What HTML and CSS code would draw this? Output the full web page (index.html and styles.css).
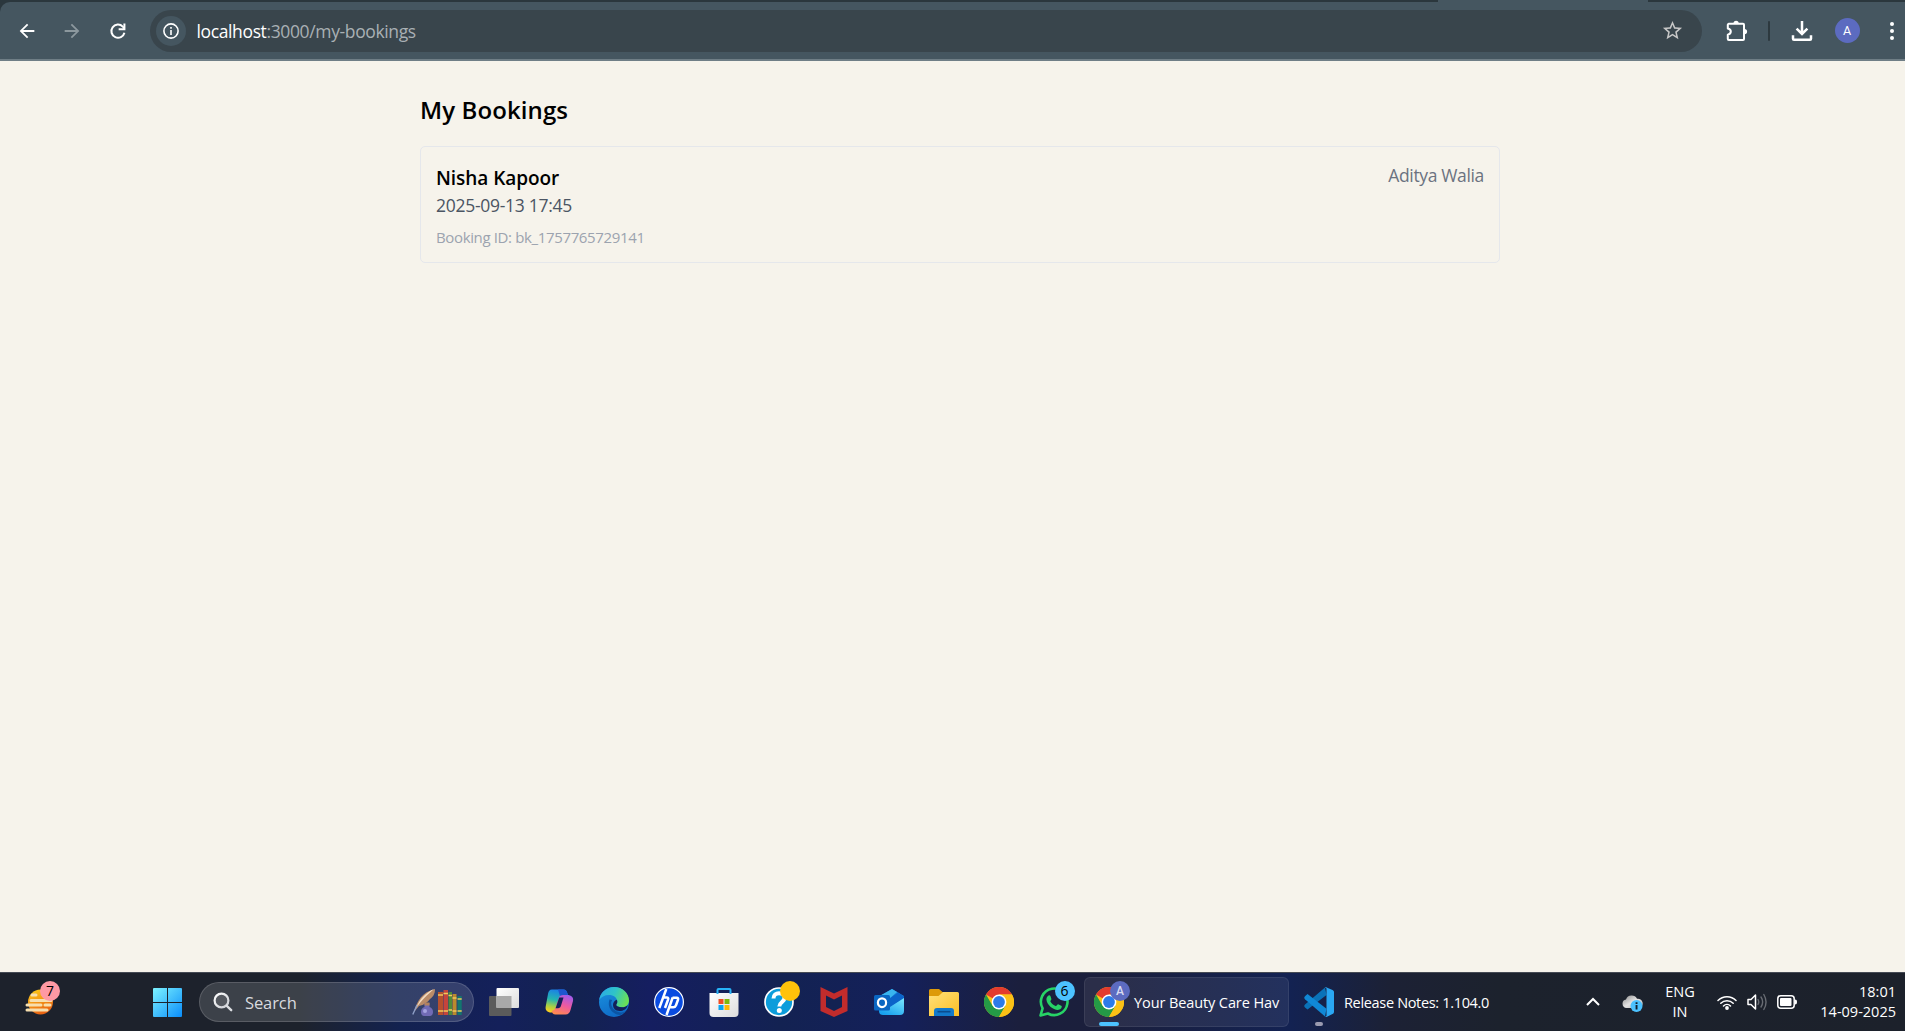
FILE: index.html
```html
<!DOCTYPE html>
<html lang="en">
<head>
<meta charset="utf-8">
<title>My Bookings</title>
<link rel="stylesheet" href="styles.css">
</head>
<body>
<svg class="defs" width="0" height="0" aria-hidden="true">
  <defs>
    <linearGradient id="win" x1="0" y1="0" x2="1" y2="1"><stop offset="0" stop-color="#7df3ff"/><stop offset="1" stop-color="#0a8dfa"/></linearGradient>
    <linearGradient id="sun" x1="0" y1="0" x2="0.4" y2="1"><stop offset="0" stop-color="#ffd21a"/><stop offset="1" stop-color="#ea6412"/></linearGradient>
    <linearGradient id="lens" x1="0" y1="0" x2="1" y2="1"><stop offset="0" stop-color="#fff"/><stop offset="1" stop-color="#c9ccd2"/></linearGradient>
    <linearGradient id="white" x1="0" y1="0" x2="1" y2="1"><stop offset="0" stop-color="#fff"/><stop offset="1" stop-color="#dcdcdc"/></linearGradient>
    <linearGradient id="cpL" x1="0.5" y1="0" x2="0.3" y2="1"><stop offset="0" stop-color="#1a7fe8"/><stop offset="0.45" stop-color="#25b6b0"/><stop offset="0.75" stop-color="#a9cf45"/><stop offset="1" stop-color="#ffcf1c"/></linearGradient>
    <linearGradient id="cpR" x1="0.7" y1="0" x2="0.3" y2="1"><stop offset="0" stop-color="#a25bea"/><stop offset="0.5" stop-color="#ee5aa0"/><stop offset="1" stop-color="#ff8a4f"/></linearGradient>
    <linearGradient id="edA" x1="0" y1="0.2" x2="1" y2="0.5"><stop offset="0" stop-color="#2ba9e8"/><stop offset="0.5" stop-color="#2fc3c8"/><stop offset="1" stop-color="#6be055"/></linearGradient>
    <linearGradient id="edB" x1="0" y1="0" x2="0.4" y2="1"><stop offset="0" stop-color="#1b94e0"/><stop offset="1" stop-color="#0f6cc8"/></linearGradient>
    <linearGradient id="fold" x1="0" y1="0" x2="1" y2="1"><stop offset="0" stop-color="#ffe07a"/><stop offset="1" stop-color="#fcbf24"/></linearGradient>
    <linearGradient id="otl" x1="1" y1="0" x2="0.3" y2="1"><stop offset="0" stop-color="#7be8fd"/><stop offset="1" stop-color="#18a0ee"/></linearGradient>
    <linearGradient id="cloud" x1="0" y1="0" x2="1" y2="1"><stop offset="0" stop-color="#8a8a8a"/><stop offset="0.5" stop-color="#e2e2e2"/><stop offset="1" stop-color="#b0b0b0"/></linearGradient>
    <symbol id="chrome" viewBox="0 0 30 30">
      <circle cx="15" cy="15" r="15" fill="#fbc116"/>
      <path d="M15 15 2 7.5A15 15 0 0 1 28 7.5H15z" fill="#e33b2e"/>
      <path d="M2 7.5A15 15 0 0 0 15 30L21.5 18.75 15 15 8.5 18.75z" fill="#249a46"/>
      <path d="M28 7.5A15 15 0 0 1 15 30L21.5 18.75 15 7.5z" fill="#fbc116"/>
      <circle cx="15" cy="15" r="7.4" fill="#fff"/>
      <circle cx="15" cy="15" r="5.9" fill="#2c7be9"/>
    </symbol>
  </defs>
</svg>

<header class="browser">
  <div class="tab-strip"><span class="tab"></span></div>
  <div class="toolbar">
    <nav class="nav">
      <svg viewBox="0 0 24 24" width="22" height="22"><path fill="#fff" d="M20 11H7.800l5.600-5.600L12 4l-8 8 8 8 1.400-1.400L7.800 13H20z"/></svg>
      <svg viewBox="0 0 24 24" width="22" height="22"><path fill="#8c989e" d="M4 11h12.200l-5.600-5.600L12 4l8 8-8 8-1.400-1.400 5.600-5.600H4z"/></svg>
      <svg viewBox="0 0 24 24" width="22" height="22"><path fill="none" stroke="#fff" stroke-width="2.200" d="M19 13.800A7.200 7.200 0 1 1 17.200 7.200L19 9"/><path fill="none" stroke="#fff" stroke-width="2.200" d="M19 3.700V10h-6.300"/></svg>
    </nav>
    <div class="address">
      <span class="site-info"><svg viewBox="0 0 16 16" width="16" height="16"><circle cx="8" cy="8" r="7.100" fill="none" stroke="#fff" stroke-width="1.600"/><path fill="#fff" d="M7.200 7h1.600v5H7.200zM7.200 4h1.600v1.700H7.200z"/></svg></span>
      <span class="url"><b>localhost</b>:3000/my-bookings</span>
      <svg class="star" viewBox="0 0 24 24" width="23" height="23"><path fill="#c7c7c7" d="M22 9.240l-7.190-.620L12 2 9.190 8.630 2 9.240l5.460 4.730L5.820 21 12 17.270 18.180 21l-1.630-7.030zM12 15.400l-3.760 2.270 1-4.280-3.320-2.880 4.380-.380L12 6.100l1.710 4.040 4.380.380-3.320 2.880 1 4.280z"/></svg>
    </div>
    <div class="actions">
      <svg class="puzzle" viewBox="0 0 22 22" width="22" height="22"><path fill="none" stroke="#fff" stroke-width="2" stroke-linejoin="round" d="M3.300 3.800H17a1 1 0 0 1 1 1V19a1 1 0 0 1-1 1H2.800a1 1 0 0 1-1-1v-4.300c2-.4 3-1.500 3-3.100s-1-2.700-3-3.100V4.800a1 1 0 0 1 1-1z"/><path fill="#fff" d="M7.500 3.300a2.600 2.600 0 0 1 5.200 0zM18.500 9a2.600 2.600 0 0 1 0 5.200z"/></svg>
      <i class="separator"></i>
      <svg class="download" viewBox="0 0 22 22" width="22" height="22"><path fill="none" stroke="#fff" stroke-width="2.500" d="M11 1v12.500M5.600 8.600 11 14l5.400-5.400M2 15.200v3.600a1 1 0 0 0 1 1h16a1 1 0 0 0 1-1v-3.600"/></svg>
      <span class="profile">A</span>
      <svg class="more" viewBox="0 0 4 18" width="4" height="18"><g fill="#fff"><circle cx="2" cy="2" r="2"/><circle cx="2" cy="9" r="2"/><circle cx="2" cy="16" r="2"/></g></svg>
    </div>
  </div>
</header>

<main class="page">
  <h1>My Bookings</h1>
  <article class="booking">
    <div class="details">
      <h2>Nisha Kapoor</h2>
      <p class="when">2025-09-13 17:45</p>
      <p class="ref">Booking ID: bk_1757765729141</p>
    </div>
    <p class="client">Aditya Walia</p>
  </article>
</main>

<footer class="taskbar">
  <div class="weather">
    <svg viewBox="0 0 30 28" width="30" height="28"><circle cx="15.500" cy="14" r="12.500" fill="url(#sun)"/><g stroke="#f7dfae" stroke-width="3" stroke-linecap="round"><path d="M7 7h4M6 12.500h20M2 17h14M20 17h5M2 22h20"/></g></svg>
    <span class="badge pink">7</span>
  </div>
  <svg class="start" viewBox="0 0 29 29" width="29" height="29"><path fill="url(#win)" d="M0 1a1 1 0 0 1 1-1h13v14H0zM15 0h13a1 1 0 0 1 1 1v13H15zM0 15h14v14H1a1 1 0 0 1-1-1zM15 15h14v13a1 1 0 0 1-1 1H15z"/></svg>
  <div class="search">
    <svg viewBox="0 0 20 20" width="20" height="20"><circle cx="8.500" cy="8.500" r="6.900" fill="#ffffff20" stroke="url(#lens)" stroke-width="2.200"/><path stroke="#dcdee2" stroke-width="2.400" stroke-linecap="round" d="m13.800 13.800 4.400 4.400"/></svg>
    <span>Search</span>
    <svg class="highlight" viewBox="0 0 50 28" width="50" height="28">
      <path d="M2 24C5 13 10 4 23 1c0 5-2 8-5 10-2 3-6 6-11 7z" fill="#b98b68"/><path d="M4 20C8 11 13 5 22 1 15 7 10 12 4 20z" fill="#f3dcc0"/><path d="M.8 26.500 5 17" stroke="#8fa0c8" stroke-width="1.400"/>
      <path d="M12.500 15h5v4c2.500 1 3.500 2.500 3.500 5 0 2.500-1.500 4-3 4h-6c-1.500 0-3-1.500-3-4 0-2.500 1-4 3.500-5z" fill="#716bb5"/><path d="M12.500 14.500h5v3h-5z" fill="#b3825e"/><circle cx="13" cy="23" r="2" fill="#a5a3e0"/>
      <path fill="#b5502e" d="M26 4h5v23h-5z"/><path fill="#c5443c" d="M31.500 2H36v25h-4.500z"/><path fill="#4e8a3c" d="M36.500 4H40v23h-3.500z"/><path fill="#ba8a2d" d="M40.500 6h4v21h-4z"/><path fill="#12766f" d="M45.500 8h4.200v19h-4.200z"/>
      <path stroke="#f0c95a" stroke-width="1.300" d="M26 7h5M26 23h5M31.500 5.500H36M31.500 23H36M36.500 7.500H40M36.500 22H40M40.500 10h4M40.500 23h4M45.500 11h4.200M45.500 23h4.200"/>
    </svg>
  </div>
  <div class="pinned">
    <span class="slot"><svg viewBox="0 0 30 30" width="30" height="30"><rect y="9" width="22.500" height="20" rx="1" fill="#5b5b5b"/><rect x="7.500" y="1" width="22.500" height="20" rx="1" fill="url(#white)"/><path fill="#a9a9a9" d="M7.500 9h15v12h-15z"/></svg></span>
    <span class="slot"><svg viewBox="0 0 30 30" width="30" height="30"><path fill="url(#cpL)" d="M8 2.500h11.500c2 0 3 1 3.600 3L24 8h-5c-2 0-3 1-3.700 3l-3.600 11c-.8 2.200-2 3.500-4.500 3.500-4 0-6.200-2.500-5.500-6L4 7c.6-2.800 1.500-4.500 4-4.500z"/><path fill="#1f56cf" d="M14 2.500h5.500c2 0 3 1 3.600 3L24 8h-5c-1.300 0-2.200.5-2.900 1.500z"/><path fill="url(#cpR)" d="M23 8c4.500 0 6.800 2.500 6 6l-2.500 9c-.8 2.800-2.200 4.500-5 4.500H11.500c-2.500 0-3.300-1.500-4-3.800 2.500 0 3.500-1.200 4.200-3.500L15 10.500C15.600 9 16.800 8 19 8z"/><path fill="#131f58" d="m15.200 10.500-3.600 10.700h2.300c1.800 0 2.500-.8 3-2.200l2.600-8.500z"/></svg></span>
    <span class="slot"><svg viewBox="0 0 30 30" width="30" height="30"><circle cx="15" cy="15" r="15" fill="url(#edB)"/><path fill="url(#edA)" d="M.2 13C1.200 5.500 7.500 0 15 0c8.500 0 15 6 15 13.500 0 4.300-3 6.800-7 6.800-3.500 0-5.800-1.200-5.800-2.300 0-.8 1.100-1.300 1.100-3.300C18.300 10.500 14.500 8 10 8 5.500 8 2 10 .2 13z"/><path fill="#0b55a5" d="M10.500 12.500C9 17 10 22 14 25.300c2 1.700 4.500 2.700 7.500 2.600l5-3.300c-2 .8-4 1-6 .6-4.500-.8-8-4.200-8.300-8.200-.1-1.700.3-3 1-4z"/><path fill="#131f58" d="M17.200 18c0 1.100 2.300 2.300 5.800 2.300 2.500 0 4.500-.9 5.700-2.400C28.300 21.500 24.500 24 20.500 24c-4 0-6.500-3-6.500-6 0-2.500 1.500-4.500 3.800-5.200.4.600.5 1.300.5 1.900 0 2-1.100 2.500-1.100 3.300z"/></svg></span>
    <span class="slot"><svg viewBox="0 0 30 30" width="30" height="30"><circle cx="15" cy="15" r="14.400" fill="#0a4be0" stroke="#fff" stroke-width="1.200"/><g fill="none" stroke="#fff" stroke-width="2.500"><path d="M12.300 2 5.300 21M9.500 10.500h3.300c1.400 0 1.700.8 1.300 2L11 21M18.700 10.500 12.500 28M18.500 10.800h4.200c1.500 0 1.700.8 1.300 2l-2 5.500c-.5 1.300-1.200 2-2.700 2h-3.600"/></g></svg></span>
    <span class="slot"><svg viewBox="0 0 30 30" width="30" height="30"><path fill="url(#white)" d="M.500 6h29v20a4 4 0 0 1-4 4h-21a4 4 0 0 1-4-4z"/><path fill="none" stroke="#27b3f7" stroke-width="2" d="M8.500 7V3a1 1 0 0 1 1-1h11a1 1 0 0 1 1 1v4"/><path fill="#f04e23" d="M9.500 12h5v5h-5z"/><path fill="#7fba0a" d="M15.500 12h5v5h-5z"/><path fill="#09a4ef" d="M9.500 18h5v5h-5z"/><path fill="#ffb904" d="M15.500 18h5v5h-5z"/></svg></span>
    <span class="slot"><svg viewBox="0 0 30 30" width="30" height="30"><circle cx="15" cy="15" r="14" fill="#0c9ddb" stroke="#fff" stroke-width="1.700"/><path fill="none" stroke="#fff" stroke-width="4" d="M9.500 11.500C9.500 8 12 6.200 15 6.200s5.500 1.700 5.500 4.800c0 4-5.200 4-5.200 8.500"/><circle cx="15.300" cy="23.500" r="2.500" fill="#fff"/></svg><i class="badge amber"></i></span>
    <span class="slot"><svg viewBox="0 0 30 30" width="30" height="30"><path fill="#c22c2c" d="m1.500 0 13.500 6.500L28.500 0v24L15 30 1.500 24z"/><path fill="#132252" d="M7 8.500 15 12.500l8-4V20l-8 4-8-4z"/></svg></span>
    <span class="slot"><svg viewBox="0 0 30 30" width="30" height="30"><path fill="#1580da" d="M5 9.500 18 2l12 7v9l-12 4H5z"/><path fill="#39b5ef" d="m6 8.800 12-6.800 5 3-8 7H8z"/><path fill="#0b63c9" d="m15 12 9-6.500 6 4v2L16 20z"/><path fill="url(#otl)" d="M30 11v13a4 4 0 0 1-4 4H9c-2 0-4-1-4-4v-2h8z"/><rect y="8" width="16" height="15.500" rx="1.500" fill="#0a66c2"/><ellipse cx="8" cy="15.700" rx="4.100" ry="4.400" fill="none" stroke="#fff" stroke-width="2.200"/></svg></span>
    <span class="slot"><svg viewBox="0 0 30 30" width="30" height="30"><path fill="#dd9a09" d="M0 3.500a1.500 1.500 0 0 1 1.500-1.500H10l3.500 3H22v8H0z"/><path fill="url(#fold)" d="M0 9h9.500L14 5h14.500A1.500 1.500 0 0 1 30 6.500V29H0z"/><path fill="#1279cb" d="M5 29v-5a3 3 0 0 1 3-3h14a3 3 0 0 1 3 3v5z"/><path stroke="#0a4d8f" stroke-width="1.600" d="M8.500 24.700h13"/></svg></span>
    <span class="slot"><svg width="30" height="30"><use href="#chrome"/></svg></span>
    <span class="slot"><svg viewBox="0 0 30 30" width="30" height="30"><path fill="none" stroke="#27d366" stroke-width="2.600" stroke-linejoin="round" d="M1.500 28.500 3.600 21.300A13.300 13.300 0 1 1 8.900 26.500z"/><path fill="#27d366" d="M10.700 8.300c.8 0 1.300 2.700 1.700 3.700.3.700-1.400 1.900-1 2.500 1.200 2.200 3 3.700 5.300 4.600.7.300 1.800-2.100 2.500-1.800l3.500 1.800c.4 2.300-1.700 3.900-3.900 3.900-4.600 0-11.300-5.300-11.400-10.700 0-1.900 1.600-4 3.300-4z"/></svg><span class="badge blue">6</span></span>
  </div>
  <div class="task active">
    <span class="app"><svg width="30" height="30"><use href="#chrome"/></svg><span class="badge violet">A</span><i class="indicator wide"></i></span>
    <span class="label care">Your Beauty Care Hav</span>
  </div>
  <div class="task">
    <span class="app"><svg viewBox="0 0 30 30" width="30" height="30"><path fill="#0a72b8" d="M3.500 22.500 1 20.500c-1-.8-1-2 0-3L21 .5 22.500 8z"/><path fill="#1088d6" d="M3.500 7 1 9.200c-1 .9-1 2.100 0 3L21 29.500l1.500-7.700z"/><path fill="#2aa7f3" d="M21.500 0 28.500 3c1 .5 1.500 1.200 1.500 2.300v19.400c0 1.100-.5 1.800-1.500 2.300L22.500 30c-.6.200-1.300 0-1.500-.5.800.3 1.500 0 1.500-1V2c0-1-.7-1.500-1.500-1.300z"/></svg><i class="indicator"></i></span>
    <span class="label">Release Notes: 1.104.0</span>
  </div>
  <div class="tray">
    <svg class="chevron" viewBox="0 0 14 10" width="14" height="10"><path fill="none" stroke="#fff" stroke-width="2" d="m1 8 6-6 6 6"/></svg>
    <svg class="onedrive" viewBox="0 0 21 17" width="21" height="17"><path fill="url(#cloud)" d="M4.500 13a4.300 4.300 0 0 1-.5-8.500A6 6 0 0 1 15 3.800 4.500 4.500 0 0 1 17 13z"/><circle cx="14.500" cy="11" r="6" fill="#4cc2ff"/><path fill="#12212e" d="M13.600 10h1.900v4.500h-1.900zM13.600 7.300h1.900v1.800h-1.900z"/></svg>
    <span class="language">ENG<br>IN</span>
    <svg class="wifi" viewBox="0 0 20 16" width="20" height="16"><g fill="none" stroke="#fff" stroke-width="1.500" stroke-linecap="round"><path d="M1 6.500a12.500 12.500 0 0 1 18 0M3.800 9.300a8.700 8.700 0 0 1 12.400 0M6.500 12a5 5 0 0 1 7 0"/></g><circle cx="10" cy="14" r="1.900" fill="#fff"/></svg>
    <svg class="volume" viewBox="0 0 20 18" width="20" height="18"><path fill="none" stroke="#fff" stroke-width="1.500" stroke-linejoin="round" d="M1 6.500h3L8.500 2v14L4 11.500H1z"/><path fill="none" stroke="#686c73" stroke-width="1.400" stroke-linecap="round" d="M11 6.500q1.500 2.500 0 5M14 4q3.300 5 0 10M16.800 1.500q4.500 7.500 0 15"/></svg>
    <svg class="battery" viewBox="0 0 20 14" width="20" height="14"><rect x=".8" y=".8" width="16.400" height="12.400" rx="3" fill="none" stroke="#fff" stroke-width="1.500"/><rect x="3" y="3" width="11.500" height="8" rx="1" fill="#fff"/><path fill="#fff" d="M18 4.500c1.300 0 2 .8 2 2.500s-.7 2.500-2 2.500z"/></svg>
    <span class="clock">18:01<br>14-09-2025</span>
  </div>
</footer>
</body>
</html>
```
FILE: styles.css
```css
* { box-sizing: border-box; margin: 0; padding: 0; }

body {
  display: flex;
  flex-direction: column;
  height: 1031px;
  overflow: hidden;
  background: #f6f3eb;
  color: #000;
  font-family: "Open Sans", "Noto Sans", sans-serif;
}

svg { display: block; flex: none; }
.defs { position: absolute; }

/* Browser toolbar */
.browser { flex: none; background: #2b373d; }
.tab-strip { height: 2px; padding-left: 1438px; }
.tab { display: block; width: 210px; height: 2px; background: #455660; }
.toolbar {
  display: flex;
  align-items: center;
  height: 59px;
  padding-left: 16px;
  background: #455660;
  border-bottom: 2px solid #6f7e86;
  border-radius: 10px 0 0 0;
}
.nav { display: flex; gap: 23.3px; width: 134px; }
.address {
  display: flex;
  align-items: center;
  width: 1552px;
  height: 42px;
  padding: 0 18px 0 6px;
  background: #39454c;
  border-radius: 21px;
}
.site-info {
  display: flex;
  align-items: center;
  justify-content: center;
  width: 30px;
  height: 30px;
  border-radius: 50%;
  background: #455660;
}
.url {
  margin-left: 10.5px;
  color: #a9b0b4;
  font-size: 17.5px;
  line-height: 24px;
  letter-spacing: -0.37px;
}
.url b { color: #fff; font-weight: 400; }
.star { margin-left: auto; }
.actions { display: flex; align-items: center; height: 42px; margin-left: 23.5px; }
.separator { width: 2px; height: 20px; margin: 0 21.5px 0 20px; background: #2d393f; border-radius: 1px; }
.profile {
  width: 25px;
  height: 25px;
  margin-left: 21.5px;
  border-radius: 50%;
  background: #5c6bc0;
  color: #fff;
  font: 12.5px/25px Roboto, sans-serif;
  text-align: center;
}
.more { margin-left: 30.5px; }

/* Bookings page */
.page { flex: 1; width: 1080px; margin-left: 420px; padding-top: 33px; }
h1 { font-size: 24px; font-weight: 600; line-height: 32px; letter-spacing: 0.1px; }
.booking {
  display: flex;
  justify-content: space-between;
  height: 117px;
  margin-top: 20px;
  padding: 15px;
  border: 1px solid #e5e7eb;
  border-radius: 5px;
}
.details { padding-top: 2px; }
h2 { font-size: 19px; font-weight: 600; line-height: 28px; letter-spacing: -0.05px; }
.when { color: #4b5563; font-size: 17.5px; line-height: 27px; letter-spacing: -0.28px; }
.ref { margin-top: 8px; color: #9ca3af; font-size: 15px; line-height: 21px; letter-spacing: -0.36px; }
.client { color: #6b7280; font-size: 17.5px; line-height: 27px; letter-spacing: -0.35px; }

/* Taskbar */
.taskbar {
  display: flex;
  align-items: center;
  flex: none;
  height: 59px;
  padding: 0 9px 0 25px;
  border-top: 1px solid #454a54;
  background: linear-gradient(90deg, #1d222c 0, #1d222c 300px, #132250 400px, #14205a 500px, #132251 580px, #151e60 650px, #132252 780px, #14205a 900px, #1b1f3d 1020px, #1b1f3c 1100px, #132252 1290px, #1c2135 1390px, #1c222d 1500px, #1c212b 100%);
  color: #fff;
  font-size: 14.5px;
}
.weather { position: relative; width: 128px; }
.badge {
  position: absolute;
  width: 20px;
  height: 20px;
  border-radius: 50%;
  color: #000;
  font-size: 14px;
  line-height: 20px;
  text-align: center;
}
.pink { left: 15px; top: -7px; background: #ff99a4; }
.amber { right: 6.5px; top: -6px; background: #ffc20a; }
.blue { right: 6.5px; top: -6px; background: #4cc2ff; }
.violet { right: -6px; top: -6px; background: #5c6bc0; color: #d9dcf2; font: 500 12px/20px Roboto, sans-serif; }

.search {
  display: flex;
  align-items: center;
  width: 275px;
  height: 40px;
  margin-left: 17px;
  padding: 0 11px 0 13px;
  border: 1px solid #ffffff26;
  border-radius: 20px;
  background: #ffffff24;
  color: #d8dadf;
  font-size: 16.5px;
  letter-spacing: -0.1px;
}
.search span { margin-left: 12px; }
.highlight { margin-left: auto; }

.pinned { display: flex; margin-left: 2px; }
.slot { position: relative; display: flex; justify-content: center; width: 55px; }

.task { display: flex; align-items: center; height: 50px; padding: 0 10px; margin-left: 5px; }
.task.active {
  width: 205px;
  margin-left: 3px;
  padding-left: 9px;
  border: 1px solid #ffffff14;
  border-radius: 6px;
  background: #ffffff12;
}
.app { position: relative; }
.indicator {
  position: absolute;
  left: 11px;
  top: 35px;
  width: 8px;
  height: 4px;
  border-radius: 2px;
  background: #9a9bb0;
}
.indicator.wide { left: 5px; width: 20px; background: #4cc2ff; }
.label { margin-left: 10px; font-size: 14.5px; letter-spacing: -0.33px; white-space: nowrap; }
.care { letter-spacing: -0.1px; }

.tray { display: flex; align-items: center; margin-left: auto; line-height: 20px; }
.onedrive { margin: 3px 0 0 22px; }
.language { width: 50px; margin-left: 12px; text-align: center; }
.wifi { margin-left: 12px; }
.volume { margin-left: 10px; }
.battery { margin-left: 10px; }
.clock { width: 99px; text-align: right; }
```
